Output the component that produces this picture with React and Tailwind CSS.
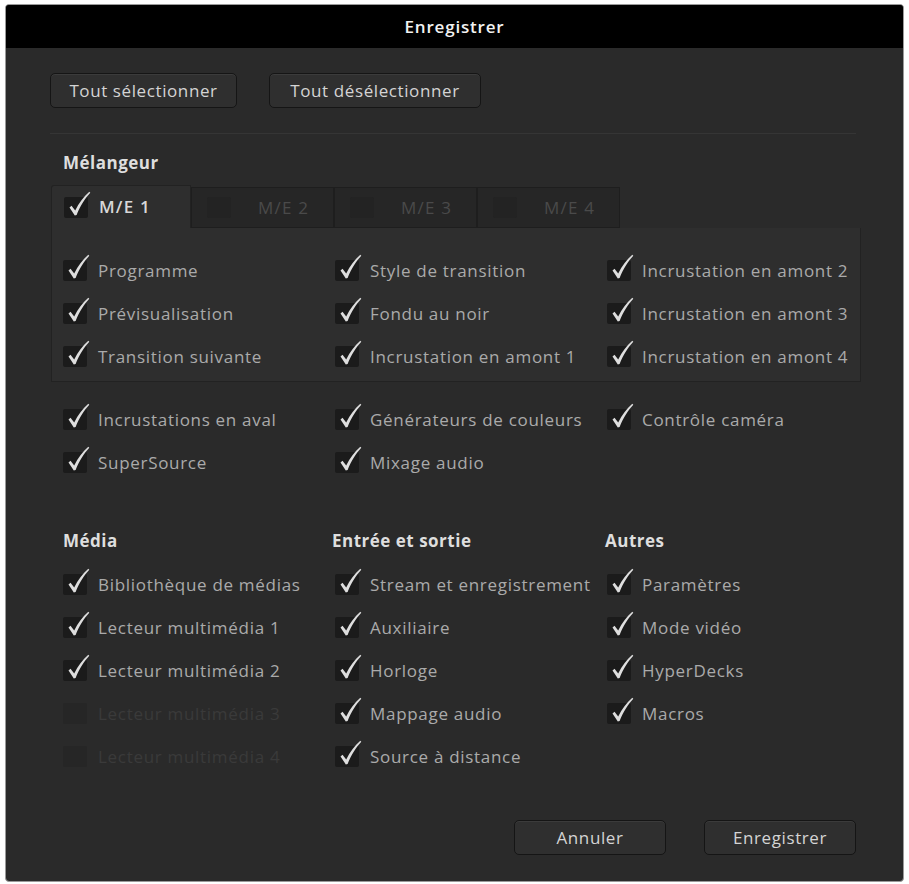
import React from "react";

function Check() {
  return (
    <svg
      className="absolute left-[2px] top-[-7px] pointer-events-none"
      width="26"
      height="28"
      viewBox="0 0 26 28"
    >
      <path
        d="M3.5 17.5 L5.5 15.8 L9.2 20.4 C13 13 17.5 6.8 23.3 1.8 L24.3 2.8 C19 8.7 14.5 15.5 10.6 25 L8.8 25.4 Z"
        fill="#dedede"
      />
    </svg>
  );
}

function Box({ checked = true, disabled = false }) {
  return (
    <div
      className={
        "relative w-[24px] h-[21px] shrink-0 rounded-[2px] " +
        (disabled ? "bg-[#262626]" : "bg-[#1b1b1b]")
      }
    >
      {checked && <Check />}
    </div>
  );
}

function Item({ label, checked = true, disabled = false }) {
  return (
    <div className="h-[43px] w-[272px] flex items-center">
      <Box checked={checked} disabled={disabled} />
      <span
        className={
          "ml-[11px] text-[17px] whitespace-nowrap tracking-[0.7px] " +
          (disabled ? "text-[#3a3a3a]" : "text-[#aaaaaa]")
        }
      >
        {label}
      </span>
    </div>
  );
}

function Btn({ children, w }) {
  return (
    <div
      className={
        "h-[35px] flex items-center justify-center rounded-[5px] border border-[#151515] bg-[#2f2f2f] text-[17px] tracking-[0.6px] text-[#d4d4d4] shadow-[inset_0_1px_0_rgba(255,255,255,0.06)] " +
        w
      }
    >
      {children}
    </div>
  );
}

function Tab({ label, active }) {
  if (active) {
    return (
      <div className="w-[140px] h-[43px] flex items-center pl-[12px] bg-[#2e2e2e] border-t border-l border-r border-[#222] rounded-tl-[3px]">
        <Box />
        <span className="ml-[11px] text-[17px] font-semibold tracking-[1.2px] text-[#d8d8d8]">{label}</span>
      </div>
    );
  }
  return (
    <div className="w-[143px] h-[41px] flex items-center pl-[15px] bg-[#262626] border border-[#1e1e1e]">
      <div className="w-[24px] h-[21px] rounded-[2px] bg-[#232323]" />
      <span className="ml-[27px] text-[17px] tracking-[1.2px] text-[#4a4a4a]">{label}</span>
    </div>
  );
}

export default function App() {
  return (
    <div
      className="w-[909px] h-[884px] bg-white pt-[4px] pl-[5px]"
      style={{ fontFamily: '"Open Sans", "Liberation Sans", sans-serif' }}
    >
      <div className="w-[899px] h-[878px] flex flex-col bg-[#2a2a2a] border border-[#9a9a9a] rounded-[4px] overflow-hidden">
        <div className="h-[43px] shrink-0 bg-black flex items-center justify-center text-[#f2f2f2] font-semibold text-[17px] tracking-[0.8px]">
          Enregistrer
        </div>
        <div className="flex-1 flex flex-col pl-[44px] pr-[47px]">
          <div className="mt-[25px] flex gap-[32px]">
            <Btn w="w-[187px]">Tout sélectionner</Btn>
            <Btn w="w-[212px]">Tout désélectionner</Btn>
          </div>
          <div className="mt-[25px] h-px w-[806px] bg-[#353535]" />
          <div className="mt-[19px] pl-[13px] h-[20px] leading-[20px] text-[17px] font-bold tracking-[0.5px] text-[#dedede]">
            Mélangeur
          </div>
          <div className="mt-[12px] ml-[1px] flex items-end">
            <Tab label="M/E 1" active />
            <Tab label="M/E 2" />
            <Tab label="M/E 3" />
            <Tab label="M/E 4" />
          </div>
          <div className="ml-[1px] w-[810px] h-[154px] pt-[21px] pl-[11px] bg-[#2e2e2e] border border-[#222] border-t-0 grid grid-cols-[272px_272px_260px] grid-rows-[43px_43px_43px] grid-flow-col">
            <Item label="Programme" />
            <Item label="Prévisualisation" />
            <Item label="Transition suivante" />
            <Item label="Style de transition" />
            <Item label="Fondu au noir" />
            <Item label="Incrustation en amont 1" />
            <Item label="Incrustation en amont 2" />
            <Item label="Incrustation en amont 3" />
            <Item label="Incrustation en amont 4" />
          </div>
          <div className="mt-[16px] pl-[13px] grid grid-cols-[272px_272px_260px] grid-rows-[43px_43px] grid-flow-col">
            <Item label="Incrustations en aval" />
            <Item label="SuperSource" />
            <Item label="Générateurs de couleurs" />
            <Item label="Mixage audio" />
            <Item label="Contrôle caméra" />
          </div>
          <div className="mt-[47px] pl-[13px] flex">
            <div className="w-[272px] flex flex-col">
              <div className="h-[20px] leading-[20px] text-[17px] font-bold tracking-[0.5px] text-[#dedede]">Média</div>
              <div className="mt-[12px] flex flex-col">
                <Item label="Bibliothèque de médias" />
                <Item label="Lecteur multimédia 1" />
                <Item label="Lecteur multimédia 2" />
                <Item label="Lecteur multimédia 3" checked={false} disabled />
                <Item label="Lecteur multimédia 4" checked={false} disabled />
              </div>
            </div>
            <div className="w-[272px] flex flex-col">
              <div className="h-[20px] leading-[20px] text-[17px] font-bold tracking-[0.5px] text-[#dedede] -ml-[3px]">Entrée et sortie</div>
              <div className="mt-[12px] flex flex-col">
                <Item label="Stream et enregistrement" />
                <Item label="Auxiliaire" />
                <Item label="Horloge" />
                <Item label="Mappage audio" />
                <Item label="Source à distance" />
              </div>
            </div>
            <div className="w-[260px] flex flex-col">
              <div className="h-[20px] leading-[20px] text-[17px] font-bold tracking-[0.5px] text-[#dedede] -ml-[2px]">Autres</div>
              <div className="mt-[12px] flex flex-col">
                <Item label="Paramètres" />
                <Item label="Mode vidéo" />
                <Item label="HyperDecks" />
                <Item label="Macros" />
              </div>
            </div>
          </div>
          <div className="mt-[42px] flex justify-end gap-[38px]">
            <Btn w="w-[152px]">Annuler</Btn>
            <Btn w="w-[152px]">Enregistrer</Btn>
          </div>
        </div>
      </div>
    </div>
  );
}
